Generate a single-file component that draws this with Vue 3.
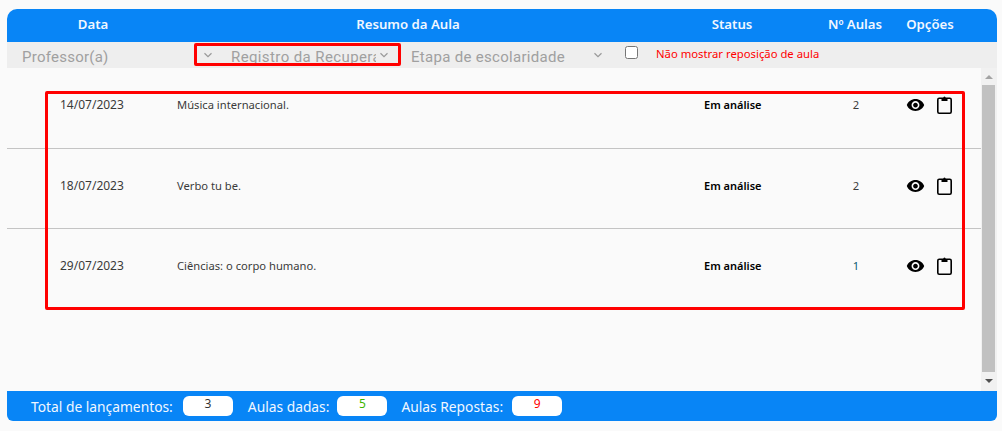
<template>
  <div class="page">
    <div class="panel">
      <div class="head">
        <div>Data</div>
        <div>Resumo da Aula</div>
        <div>Status</div>
        <div>Nº Aulas</div>
        <div>Opções</div>
      </div>
      <div class="filters">
        <div class="f-prof">Professor(a)</div>
        <div class="f-reg">
          <svg class="chev" width="10" height="6" viewBox="0 0 10 6"><path d="M1.5 1.2 5 4.6l3.5-3.4" fill="none" stroke="#999" stroke-width="1.2"/></svg>
          <span class="f-reg-text">Registro da Recuperação</span>
          <svg class="chev chev-end" width="10" height="6" viewBox="0 0 10 6"><path d="M1.5 1.2 5 4.6l3.5-3.4" fill="none" stroke="#999" stroke-width="1.2"/></svg>
          <div class="mark-small"></div>
        </div>
        <div class="f-etapa">
          <span>Etapa de escolaridade</span>
          <svg class="chev" width="10" height="6" viewBox="0 0 10 6"><path d="M1.5 1.2 5 4.6l3.5-3.4" fill="none" stroke="#999" stroke-width="1.2"/></svg>
        </div>
        <input class="check" type="checkbox" />
        <div class="f-note">Não mostrar reposição de aula</div>
      </div>
      <div class="body">
        <div class="list">
          <div v-for="(r, i) in rows" :key="i" class="row" :class="{ ruled: i < 2 }">
            <div class="c-date">{{ r.date }}</div>
            <div class="c-res">{{ r.text }}</div>
            <div class="c-status">Em análise</div>
            <div class="c-num" :class="{ teal: r.n === 1 }">{{ r.n }}</div>
            <div class="c-opt">
              <svg width="19" height="20" viewBox="0 0 24 24"><path d="M12 4.500C7 4.500 2.730 7.610 1 12c1.730 4.390 6 7.500 11 7.500s9.270-3.110 11-7.500c-1.730-4.390-6-7.500-11-7.500zM12 17c-2.760 0-5-2.240-5-5s2.240-5 5-5 5 2.240 5 5-2.240 5-5 5zm0-8c-1.660 0-3 1.340-3 3s1.340 3 3 3 3-1.340 3-3-1.340-3-3-3z" fill="#000"/></svg>
              <svg width="15" height="18" viewBox="0 0 15 18"><rect x=".8" y="2.300" width="13.400" height="14.900" rx="1.400" fill="none" stroke="#000" stroke-width="1.600"/><path d="M4.500 5V2.500h1.700C6.300 1.300 6.800.5 7.500.5s1.200.8 1.300 2h1.700V5z" fill="#000"/></svg>
            </div>
          </div>
          <div class="mark-big"></div>
        </div>
        <div class="scroll">
          <div class="arrow up"></div>
          <div class="track"><div class="thumb"></div></div>
          <div class="arrow down"></div>
        </div>
      </div>
      <div class="foot">
        <span class="f-label">Total de lançamentos:</span>
        <span class="pill dark">3</span>
        <span class="f-label">Aulas dadas:</span>
        <span class="pill green">5</span>
        <span class="f-label">Aulas Repostas:</span>
        <span class="pill red">9</span>
      </div>
    </div>
  </div>
</template>

<script setup>
const rows = [
  { date: '14/07/2023', text: 'Música internacional.', n: 2 },
  { date: '18/07/2023', text: 'Verbo tu be.', n: 2 },
  { date: '29/07/2023', text: 'Ciências: o corpo humano.', n: 1 }
]
</script>

<style>
html, body { margin: 0; background: #fafafa; }
</style>

<style scoped>
.page {
  width: 1002px;
  height: 431px;
  padding: 9px 5px 10px 7px;
  box-sizing: border-box;
  background: #fafafa;
  font-family: "Noto Sans", "Open Sans", sans-serif;
  overflow: hidden;
}
.panel { display: flex; flex-direction: column; height: 412px; }
.head {
  height: 33px;
  flex: none;
  display: grid;
  grid-template-columns: 172px 458px 190px 56px 94px;
  align-items: center;
  background: #0885f6;
  border-radius: 10px 10px 0 0;
  color: #f1f7ff;
  font-size: 13.2px;
  font-weight: 600;
  text-align: center;
  padding-bottom: 3px;
  box-sizing: border-box;
  white-space: nowrap;
}
.filters {
  height: 26px;
  flex: none;
  background: #eee;
  display: flex;
  align-items: center;
  color: #a0a0a0;
  font-size: 15px;
  font-family: "Roboto", sans-serif;
  position: relative;
}
.f-prof { width: 187px; padding-left: 15px; box-sizing: border-box; letter-spacing: .25px; margin-top: 3px; }
.f-reg {
  width: 207px;
  height: 26px;
  display: flex;
  align-items: center;
  position: relative;
  padding-left: 9px;
  box-sizing: border-box;
}
.chev { flex: none; }
.chev-end { margin-left: 3px; }
.f-reg-text {
  width: 145px;
  margin-left: 18px;
  overflow: hidden;
  white-space: nowrap;
  letter-spacing: .4px;
  margin-top: 3px;
}
.mark-small {
  position: absolute;
  left: 0;
  top: 1px;
  width: 207px;
  height: 23px;
  border: 3px solid #f00;
  border-radius: 2px;
  box-sizing: border-box;
}
.f-etapa {
  width: 193px;
  margin-left: 10px;
  display: flex;
  align-items: center;
  gap: 28px;
  letter-spacing: .3px;
  flex: none;
}
.f-etapa span { margin-top: 3px; white-space: nowrap; }
.check {
  width: 13px;
  height: 13px;
  margin: -6px 18px 0 21px;
  flex: none;
}
.f-note {
  color: #f00;
  font-size: 11.3px;
  font-family: "Noto Sans", sans-serif;
  margin-top: -3px;
  white-space: nowrap;
}
.body { flex: 1; display: flex; min-height: 0; }
.list { flex: 1; min-width: 0; position: relative; }
.row {
  height: 80px;
  box-sizing: border-box;
  display: grid;
  grid-template-columns: 117px 527px 115px 74px 1fr;
  padding: 29px 0 0 53px;
  align-items: start;
  font-size: 11.2px;
  line-height: 16px;
  color: #3a3a3a;
}
.row:first-child { height: 81px; }
.ruled { border-bottom: 1px solid #c4c4c4; }
.c-date { font-size: 12px; }
.c-status { font-weight: 600; color: #000; font-size: 11px; }
.c-num { text-align: center; }
.c-num.teal { color: #0a5b6e; }
.c-opt { display: flex; gap: 12px; align-items: center; margin-top: -2px; padding-left: 13px; }
.mark-big {
  position: absolute;
  left: 38px;
  top: 23px;
  width: 920px;
  height: 219px;
  border: 3px solid #f00;
  border-radius: 2px;
  box-sizing: border-box;
}
.scroll { width: 16px; flex: none; background: #f1f1f1; display: flex; flex-direction: column; align-items: center; }
.track { flex: 1; width: 100%; }
.thumb { height: calc(100% - 2px); margin: 0 2px 0 1px; background: #c1c1c1; }
.arrow { height: 17px; flex: none; position: relative; width: 100%; }
.arrow::after {
  content: "";
  position: absolute;
  left: 4px;
  border-left: 4px solid transparent;
  border-right: 4px solid transparent;
}
.arrow.up::after { top: 7px; border-bottom: 4px solid #a3a3a3; }
.arrow.down::after { top: 5px; border-top: 4px solid #505050; }
.foot {
  height: 30px;
  flex: none;
  background: #0885f6;
  border-radius: 0 0 6px 6px;
  display: flex;
  align-items: center;
  padding-left: 24px;
  color: #f1f7ff;
  font-size: 13.8px;
  box-sizing: border-box;
}
.f-label { white-space: nowrap; }
.pill {
  width: 50px;
  height: 20px;
  margin: 0 15px 0 9px;
  background: #fff;
  border-radius: 6px;
  font-size: 12px;
  line-height: 15px;
  text-align: center;
  flex: none;
}
.dark { color: #333; margin-left: 10px; }
.green { color: #3cb500; margin: 0 14px 0 8px; }
.red { color: #f00; }
</style>
